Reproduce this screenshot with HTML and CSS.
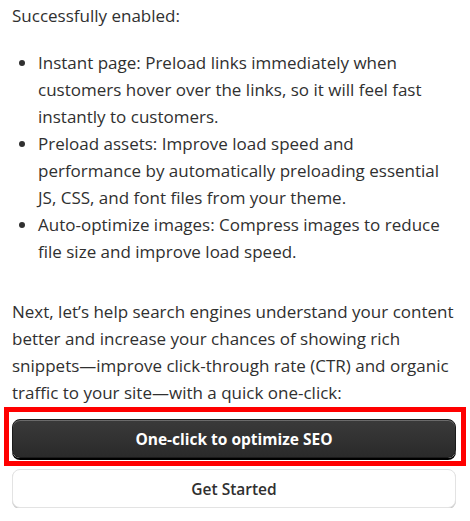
FILE: index.html
```html
<!DOCTYPE html>
<html lang="en">
<head>
  <meta charset="UTF-8">
  <meta name="viewport" content="width=device-width, initial-scale=1.0">
  <title>Speed optimization</title>
  <link rel="stylesheet" href="styles.css">
</head>
<body>
  <div class="panel">
    <p class="lead">Successfully enabled:</p>

    <ul class="features">
      <li>Instant page: Preload links immediately when customers hover over the links, so it will feel fast instantly to customers.</li>
      <li>Preload assets: Improve load speed and performance by automatically preloading essential JS, CSS, and font files from your theme.</li>
      <li>Auto-optimize images: Compress images to reduce file size and improve load speed.</li>
    </ul>

    <p class="next">Next, let’s help search engines understand your content better and increase your chances of showing rich snippets—improve click-through rate (CTR) and organic traffic to your site—with a quick one-click:</p>

    <div class="highlight">
      <button type="button" class="btn btn-primary">One-click to optimize SEO</button>
    </div>
    <button type="button" class="btn btn-secondary">Get Started</button>
  </div>
</body>
</html>
```

FILE: styles.css
```css
body {
  margin: 0;
  padding: 0;
  background-color: #fff;
  font-family: "Open Sans", "Noto Sans", Arial, sans-serif;
  color: #303030;
}
.panel {
  padding: 2px 14px 0 12px;
  font-size: 17px;
  line-height: 27px;
}
p {
  margin: 0;
}
.lead {
  margin-bottom: 20px;
}
.features {
  margin: 0 0 33px;
  padding-left: 26px;
}
.highlight {
  margin: 1px -10px 0 -8px;
  padding: 7px 5px 3px 3px;
  border: 5px solid #ff0000;
}
.btn {
  display: block;
  width: 100%;
  height: 39px;
  border-radius: 8px;
  font-family: inherit;
  font-size: 15.5px;
  cursor: pointer;
}
.btn-primary {
  background: linear-gradient(#3a3a3a, #2a2a2a);
  color: #fff;
  font-weight: 700;
  border: 1px solid #1a1a1a;
  box-shadow: inset 0 1px 0 rgba(255, 255, 255, 0.25), 0 2px 0 #000;
}
.btn-secondary {
  margin-top: 3px;
  background: #fff;
  color: #303030;
  font-weight: 600;
  border: 1px solid #e3e3e3;
  box-shadow: 0 1px 0 #cccccc;
}
```
